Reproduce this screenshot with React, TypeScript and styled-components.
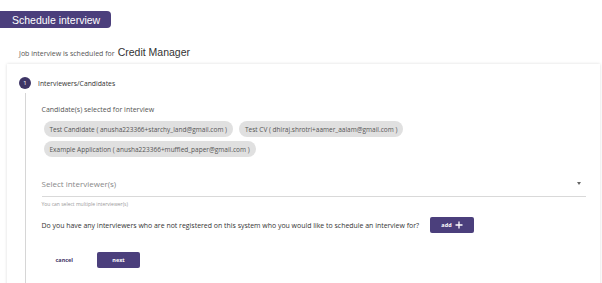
import React from "react";
import styled, { createGlobalStyle } from "styled-components";

const Global = createGlobalStyle`
  html, body { margin: 0; padding: 0; background: #fff; }
  body { font-family: "Open Sans", sans-serif; color: #333; }
`;

const Page = styled.div`
  width: 602px;
  height: 283px;
  overflow: hidden;
  padding-top: 11px;
  box-sizing: border-box;
`;

const Title = styled.div`
  display: flex;
  align-items: center;
  height: 17px;
  width: 111px;
  padding-left: 12px;
  box-sizing: border-box;
  background: #4b3f7c;
  color: #fff;
  border-radius: 0 4px 4px 0;
  font-family: "Liberation Sans", Arial, sans-serif;
  font-size: 10.5px;
  white-space: nowrap;
`;

const SubLine = styled.div`
  display: flex;
  align-items: baseline;
  gap: 3px;
  margin: 18px 0 0 19px;
  font-size: 7px;
  color: #555;
  line-height: 13px;
`;

const Role = styled.span`
  font-family: "Liberation Sans", Arial, sans-serif;
  font-size: 10.5px;
  color: #333;
`;

const Card = styled.div`
  margin: 4px 2px 0 7px;
  height: 230px;
  background: #fff;
  box-shadow: 0 0 3px rgba(0, 0, 0, 0.14);
  padding: 13px 0 0 12px;
  box-sizing: border-box;
`;

const StepHead = styled.div`
  display: flex;
  align-items: center;
  gap: 7px;
  font-size: 6.8px;
  color: #333;
`;

const StepNum = styled.div`
  width: 12px;
  height: 12px;
  border-radius: 50%;
  background: #3e3566;
  color: #fff;
  font-size: 6px;
  display: flex;
  align-items: center;
  justify-content: center;
`;

const StepBody = styled.div`
  margin: 4px 0 0 5.5px;
  border-left: 1px solid #d6d6d6;
  padding: 12px 0 0 16px;
  height: 200px;
  box-sizing: border-box;
  margin-right: 10px;
`;

const Label = styled.div`
  font-size: 7px;
  color: #555;
  line-height: 10px;
`;

const Chips = styled.div`
  display: flex;
  flex-wrap: wrap;
  gap: 4px 6px;
  margin: 6px 0 0 2px;
  width: 420px;
`;

const Chip = styled.div`
  height: 16px;
  display: flex;
  align-items: center;
  padding: 0 6px;
  border-radius: 8px;
  background: #e0e0e0;
  color: #555;
  font-size: 6.5px;
  white-space: nowrap;
`;

const Select = styled.div`
  margin-top: 17px;
  height: 18px;
  display: flex;
  align-items: center;
  justify-content: space-between;
  border-bottom: 1.5px solid #d9d9d9;
  color: #888;
  font-size: 8px;
  padding-bottom: 4px;
  margin-right: 4px;
`;

const Caret = styled.span`
  width: 0;
  height: 0;
  border-left: 2.5px solid transparent;
  border-right: 2.5px solid transparent;
  border-top: 3px solid #666;
  margin-right: 5px;
`;

const Helper = styled.div`
  font-size: 5px;
  color: #999;
  margin-top: 4px;
`;

const Question = styled.div`
  display: flex;
  align-items: center;
  gap: 11px;
  margin-top: 10px;
  font-size: 6.95px;
  color: #333;
`;

const Btn = styled.button<{ $w: number }>`
  height: 16px;
  border: none;
  border-radius: 2px;
  background: #4b3f7c;
  color: #fff;
  font-family: "Open Sans", sans-serif;
  font-weight: 700;
  font-size: 5.5px;
  display: flex;
  align-items: center;
  justify-content: center;
  gap: 3px;
  padding: 0;
  width: ${(p) => p.$w}px;
`;

const Actions = styled.div`
  display: flex;
  align-items: center;
  gap: 24px;
  margin: 19px 0 0 14px;
`;

const Cancel = styled.span`
  font-size: 5.5px;
  font-weight: 700;
  color: #3e3566;
`;

const PlusIcon = () => (
  <svg width="8" height="8" viewBox="0 0 8 8">
    <path d="M4 0.5V7.5M0.5 4H7.5" stroke="#fff" strokeWidth="1.3" />
  </svg>
);

export default function App() {
  const candidates = [
    "Test Candidate ( anusha223366+starchy_land@gmail.com )",
    "Test CV ( dhiraj.shrotri+aamer_aalam@gmail.com )",
    "Example Application ( anusha223366+muffled_paper@gmail.com )",
  ];
  return (
    <Page>
      <Global />
      <Title>Schedule interview</Title>
      <SubLine>
        Job interview is scheduled for <Role>Credit Manager</Role>
      </SubLine>
      <Card>
        <StepHead>
          <StepNum>1</StepNum>
          Interviewers/Candidates
        </StepHead>
        <StepBody>
          <Label>Candidate(s) selected for interview</Label>
          <Chips>
            {candidates.map((c) => (
              <Chip key={c}>{c}</Chip>
            ))}
          </Chips>
          <Select>
            Select interviewer(s)
            <Caret />
          </Select>
          <Helper>You can select multiple interviewer(s)</Helper>
          <Question>
            Do you have any interviewers who are not registered on this system who you would like to schedule an interview for?
            <Btn $w={44}>
              add <PlusIcon />
            </Btn>
          </Question>
          <Actions>
            <Cancel>cancel</Cancel>
            <Btn $w={43}>next</Btn>
          </Actions>
        </StepBody>
      </Card>
    </Page>
  );
}
